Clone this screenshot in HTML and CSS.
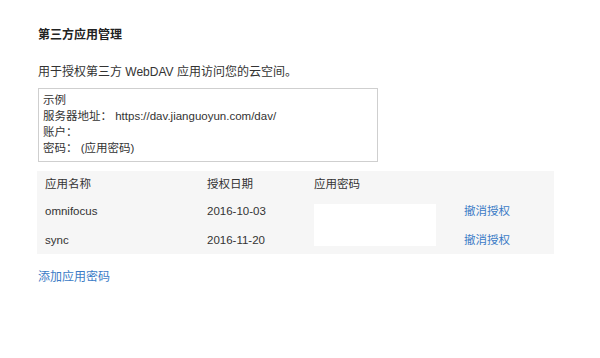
FILE: index.html
```html
<!DOCTYPE html>
<html lang="zh-CN">
<head>
<meta charset="utf-8">
<link rel="stylesheet" href="styles.css">
</head>
<body>
<div class="page">
  <h2 class="title">第三方应用管理</h2>
  <p class="desc">用于授权第三方 WebDAV 应用访问您的云空间。</p>
  <div class="example">
    <div>示例</div>
    <div>服务器地址：&nbsp;https://dav.jianguoyun.com/dav/</div>
    <div>账户：</div>
    <div>密码：&nbsp;(应用密码)</div>
  </div>
  <div class="table">
    <div class="th">应用名称</div>
    <div class="th">授权日期</div>
    <div class="th">应用密码</div>
    <div class="th"></div>
    <div class="td r1">omnifocus</div>
    <div class="td r1">2016-10-03</div>
    <div class="pwd"></div>
    <div class="td r1"><a class="link" href="#">撤消授权</a></div>
    <div class="td r2 c1">sync</div>
    <div class="td r2">2016-11-20</div>
    <div class="td r2 c4"><a class="link" href="#">撤消授权</a></div>
  </div>
  <a class="link add" href="#">添加应用密码</a>
</div>
</body>
</html>
```
FILE: styles.css
```css
html, body { margin: 0; padding: 0; background: #fff; }
body {
  font-family: "Liberation Sans", "Noto Sans CJK SC", sans-serif;
  font-size: 12px;
  color: #333;
  line-height: 16px;
}
.page { padding: 27px 0 0 38px; width: 516px; }
.title { margin: 0; font-size: 12px; font-weight: bold; line-height: 16px; color: #222; }
.desc { margin: 21px 0 8px; font-size: 12px; line-height: 16px; }
.example {
  width: 334px;
  border: 1px solid #cfcfcf;
  padding: 3px 0 5px 4px;
  font-size: 11.5px;
}
.table {
  margin-top: 9px;
  margin-left: -1px;
  background: #f6f6f6;
  display: grid;
  grid-template-columns: 162px 107px 150px 1fr;
  grid-template-rows: 25px 29px 29px;
  padding-left: 8px;
  font-size: 11.5px;
}
.th { align-self: center; font-weight: normal; color: #333; }
.td { align-self: center; }
.r1 { grid-row: 2; }
.r2 { grid-row: 3; }
.c1 { grid-column: 1; }
.c4 { grid-column: 4; }
.pwd {
  grid-column: 3;
  grid-row: 2 / span 2;
  align-self: center;
  width: 122px;
  height: 42px;
  background: #fff;
}
.link { color: #3b7bc6; text-decoration: none; }
.add { display: inline-block; margin-top: 15px; }
```
